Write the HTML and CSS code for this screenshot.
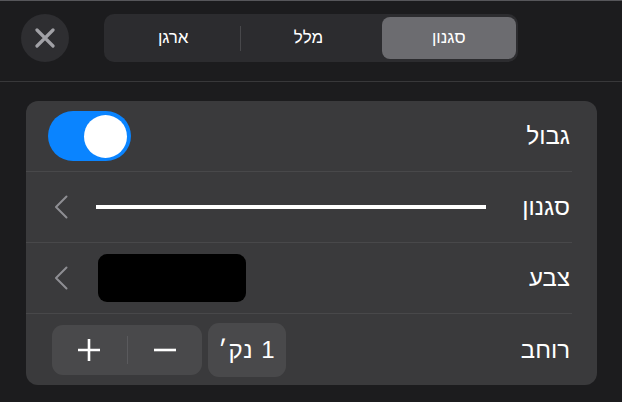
FILE: index.html
```html
<!DOCTYPE html>
<html lang="he" dir="rtl">
<head>
    <meta charset="UTF-8">
    <meta name="viewport" content="width=device-width, initial-scale=1.0">
    <title>סגנון</title>
    <link rel="stylesheet" href="styles.css">
</head>
<body>
    <div class="header" dir="ltr">
        <button class="close-btn" aria-label="סגירה">
            <svg width="20" height="20" viewBox="0 0 20 20">
                <path d="M2 2 L18 18 M18 2 L2 18" stroke="#a1a1a6" stroke-width="3.2" stroke-linecap="round" fill="none"/>
            </svg>
        </button>
        <div class="segmented">
            <div class="segment">ארגן</div>
            <span class="seg-sep"></span>
            <div class="segment">מלל</div>
            <div class="segment selected">סגנון</div>
        </div>
    </div>

    <div class="card">
        <div class="row">
            <span class="label">גבול</span>
            <div class="toggle" dir="ltr"><span class="knob"></span></div>
        </div>
        <div class="row">
            <span class="label">סגנון</span>
            <span class="stroke-line"></span>
            <svg class="chevron" width="14" height="24" viewBox="0 0 14 24">
                <path d="M12.5 1.5 L2 12 L12.5 22.5" stroke="#8e8e93" stroke-width="2" stroke-linecap="round" stroke-linejoin="round" fill="none"/>
            </svg>
        </div>
        <div class="row">
            <span class="label">צבע</span>
            <span class="swatch"></span>
            <svg class="chevron" width="14" height="24" viewBox="0 0 14 24">
                <path d="M12.5 1.5 L2 12 L12.5 22.5" stroke="#8e8e93" stroke-width="2" stroke-linecap="round" stroke-linejoin="round" fill="none"/>
            </svg>
        </div>
        <div class="row">
            <span class="label">רוחב</span>
            <div class="value-box">1 נק׳</div>
            <div class="stepper" dir="ltr">
                <button class="step-btn" aria-label="הוספה">
                    <svg width="24" height="24" viewBox="0 0 24 24">
                        <path d="M12 1 V23 M1 12 H23" stroke="#fff" stroke-width="2.6" fill="none"/>
                    </svg>
                </button>
                <span class="step-sep"></span>
                <button class="step-btn" aria-label="הפחתה">
                    <svg width="24" height="24" viewBox="0 0 24 24">
                        <path d="M1 12 H23" stroke="#fff" stroke-width="2.6" fill="none"/>
                    </svg>
                </button>
            </div>
        </div>
    </div>
</body>
</html>
```

FILE: styles.css
```css
body {
    margin: 0;
    background: #1c1c1e;
    font-family: "Liberation Sans", "DejaVu Sans", sans-serif;
    color: #fff;
}
button {
    border: none;
    padding: 0;
    cursor: pointer;
    font: inherit;
    color: inherit;
}
.header {
    display: flex;
    align-items: flex-start;
    box-sizing: border-box;
    height: 82px;
    padding: 13px 0 0 21px;
    border-top: 1px solid #56565a;
    border-bottom: 1px solid #38383a;
}
.close-btn {
    width: 48px;
    height: 48px;
    border-radius: 50%;
    background: #2e2e31;
    display: flex;
    align-items: center;
    justify-content: center;
    margin-right: 35px;
}
.segmented {
    display: flex;
    align-items: center;
    box-sizing: border-box;
    width: 414px;
    height: 48px;
    padding: 3px 2px;
    border-radius: 10px;
    background: #2c2c2f;
}
.segment {
    flex: 1;
    height: 42px;
    display: flex;
    align-items: center;
    justify-content: center;
    font-size: 17px;
    color: #fff;
    border-radius: 8px;
}
.segment.selected {
    background: #6c6c70;
    margin-left: 6px;
}
.seg-sep {
    width: 1px;
    height: 25px;
    background: #48484b;
}
.card {
    margin: 19px 25px 0 26px;
    background: #3a3a3c;
    border-radius: 12px;
}
.row {
    display: flex;
    align-items: center;
    box-sizing: border-box;
    height: 71px;
    margin-right: 25px;
    padding: 0 2px 0 22px;
    border-bottom: 1px solid #48484a;
}
.row:last-child {
    border-bottom: none;
}
.label {
    font-size: 24px;
    margin-left: auto;
}
.toggle {
    display: flex;
    justify-content: flex-end;
    align-items: center;
    box-sizing: border-box;
    width: 83px;
    height: 50px;
    padding: 0 4px;
    border-radius: 25px;
    background: #0a84ff;
}
.knob {
    width: 43px;
    height: 43px;
    border-radius: 50%;
    background: #fff;
}
.stroke-line {
    flex: 1;
    height: 4px;
    margin: 0 36px 0 28px;
    background: #fff;
}
.chevron {
    margin-left: 6px;
}
.swatch {
    width: 148px;
    height: 48px;
    margin-left: 30px;
    border-radius: 9px;
    background: #000;
}
.value-box {
    box-sizing: border-box;
    width: 78px;
    height: 54px;
    display: flex;
    align-items: center;
    justify-content: center;
    font-size: 24px;
    letter-spacing: 1px;
    border-radius: 11px;
    background: #49494b;
    margin-left: 6px;
}
.stepper {
    display: flex;
    align-items: center;
    width: 150px;
    height: 50px;
    margin-left: 4px;
    border-radius: 11px;
    background: #49494b;
}
.step-btn {
    flex: 1;
    height: 50px;
    background: transparent;
    display: flex;
    align-items: center;
    justify-content: center;
}
.step-sep {
    width: 1px;
    height: 28px;
    background: #5a5a5d;
}
```
